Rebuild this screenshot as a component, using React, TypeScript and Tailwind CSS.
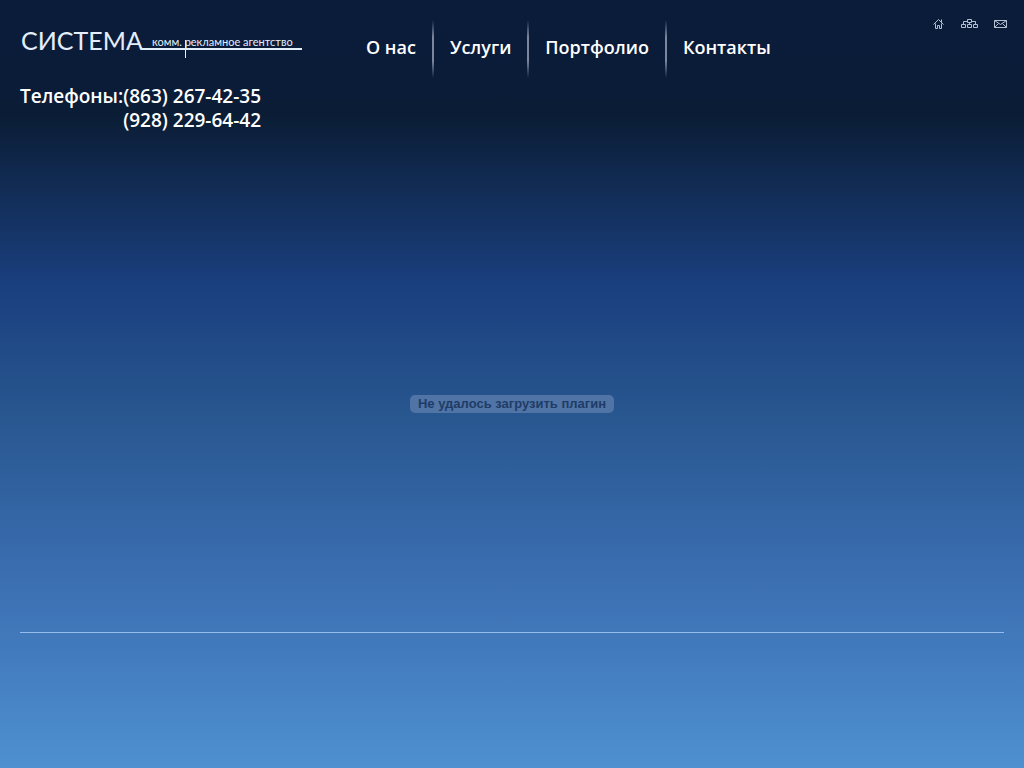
import React from 'react';

const navItems = ['О нас', 'Услуги', 'Портфолио', 'Контакты'];

function Logo() {
  return (
    <a href="#" aria-label="Система" className="block">
      <svg width="284" height="40" viewBox="0 0 284 40" fill="#e4eefb">
        <text x="1" y="30" fontSize="25" fontFamily="Lato, 'Open Sans', sans-serif">
          СИСТЕМА
        </text>
        <text x="132" y="26" fontSize="11" fontFamily="Lato, 'Open Sans', sans-serif">
          комм. рекламное агентство
        </text>
        <rect x="121" y="28" width="161" height="2" />
        <rect x="165" y="20" width="1" height="18" />
      </svg>
    </a>
  );
}

function Nav() {
  return (
    <nav className="flex pt-0.5">
      {navItems.map((item, i) => (
        <React.Fragment key={item}>
          {i > 0 && (
            <span className="h-[58px] w-0.5 bg-[linear-gradient(to_bottom,transparent,#7c879e_30%,#7c879e_70%,transparent)]" />
          )}
          <a href="#" className="px-4 pt-[15px] text-lg leading-6 font-semibold text-white">
            {item}
          </a>
        </React.Fragment>
      ))}
    </nav>
  );
}

function QuickLinks() {
  return (
    <div className="ml-auto flex gap-4">
      <a href="#" aria-label="Главная">
        <svg width="12" height="12" viewBox="0 0 12 12" fill="none" stroke="#b4bfd0">
          <path d="M0.5 6.5L5.5 1.5l5 5M2.5 5.5v5h2v-3h2v3h2v-5M8.5 4V1.5" />
        </svg>
      </a>
      <a href="#" aria-label="Карта сайта">
        <svg width="17" height="12" viewBox="0 0 17 12" fill="none" stroke="#b4bfd0">
          <path d="M6.5 1.5h4v3h-4zM0.5 6.5h4v3h-4zM6.5 6.5h4v3h-4zM12.5 6.5h4v3h-4zM8.5 4.5v2M2.5 6.5v-3h4M10.5 3.5h4v3" />
        </svg>
      </a>
      <a href="#" aria-label="Написать письмо">
        <svg width="14" height="12" viewBox="0 0 14 12" fill="none" stroke="#b4bfd0">
          <path d="M0.5 2.5h12v7h-12zM0.5 2.5l6 4l6-4M0.5 9.5l4-4M12.5 9.5l-4-4" />
        </svg>
      </a>
    </div>
  );
}

export default function App() {
  return (
    <div className="flex min-h-screen flex-col bg-[linear-gradient(to_bottom,#0b1c3a_0%,#0b1c39_12%,#0b1d35_15%,#1a3f7e_37%,#28568f_54%,#3a6db0_74%,#4e90d0_100%)] font-['Open_Sans','Noto_Sans',sans-serif]">
      <header className="flex items-start pt-[18px] pr-4 pl-5">
        <div className="w-[330px] pt-0.5">
          <Logo />
          <div className="flex pt-6 text-[19px] leading-6 font-semibold text-white">
            <span>Телефоны:</span>
            <div>
              <div>(863) 267-42-35</div>
              <div>(928) 229-64-42</div>
            </div>
          </div>
        </div>
        <Nav />
        <QuickLinks />
      </header>

      <main className="flex flex-1 items-center justify-center pt-11">
        <div className="rounded-[5px] bg-[#5074a6] px-2 font-['Liberation_Sans',Arial,sans-serif] text-[13px] leading-[18px] font-bold text-[#203c66]">
          Не удалось загрузить плагин
        </div>
      </main>

      <footer className="mx-5 h-[136px] border-t border-[#94bdec]" />
    </div>
  );
}
